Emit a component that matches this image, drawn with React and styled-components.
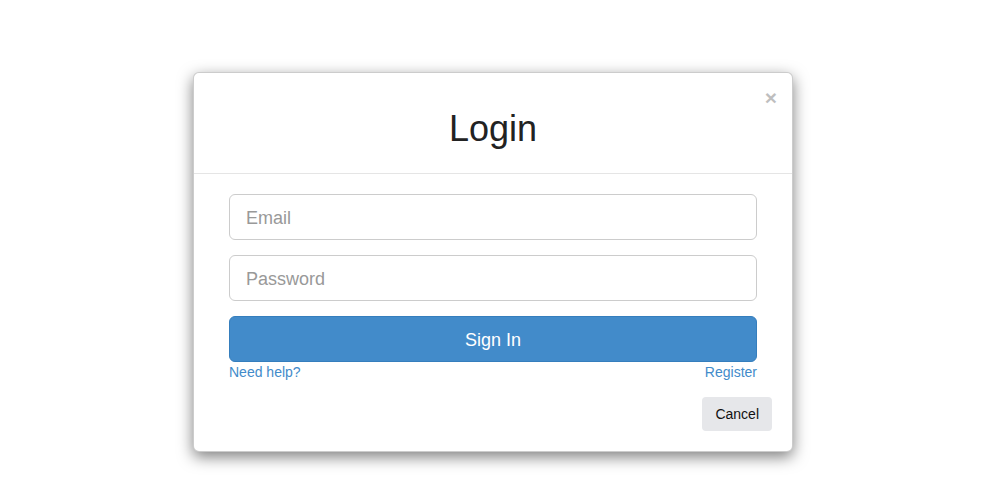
import React from "react";
import styled, { createGlobalStyle } from "styled-components";

const Global = createGlobalStyle`
  html, body { margin: 0; padding: 0; background: #fff; }
  body { font-family: "Liberation Sans", Arial, sans-serif; }
  * { box-sizing: border-box; }
`;

const Page = styled.div`
  width: 1000px;
  height: 500px;
  padding: 72px 0 0 193px;
`;

const Modal = styled.div`
  position: relative;
  width: 600px;
  background: #fff;
  border: 1px solid rgba(0, 0, 0, 0.2);
  border-radius: 6px;
  box-shadow: 0 5px 15px rgba(0, 0, 0, 0.5);
`;

const Header = styled.div`
  height: 101px;
  border-bottom: 1px solid #e5e5e5;
  display: flex;
  align-items: center;
  justify-content: center;
  padding-top: 12px;
`;

const Title = styled.h1`
  margin: 0;
  font-size: 36px;
  font-weight: 400;
  color: #222;
  line-height: 1.1;
`;

const Close = styled.button`
  position: absolute;
  top: 14px;
  right: 15px;
  border: 0;
  background: none;
  padding: 0;
  font-family: "Liberation Sans", Arial, sans-serif;
  font-size: 21px;
  font-weight: 700;
  line-height: 1;
  color: #000;
  opacity: 0.25;
`;

const Body = styled.div`
  padding: 20px 35px 0 35px;
  display: flex;
  flex-direction: column;
  gap: 15px;
`;

const Input = styled.input`
  width: 100%;
  height: 46px;
  padding: 2px 16px 0 16px;
  border: 1px solid #ccc;
  border-radius: 6px;
  font-family: "Liberation Sans", Arial, sans-serif;
  font-size: 18px;
  color: #555;
  outline: none;
  &::placeholder { color: #999; }
`;

const Stack = styled.div`
  display: flex;
  flex-direction: column;
`;

const Primary = styled.button`
  width: 100%;
  height: 46px;
  padding: 3px 0 0 0;
  border: 1px solid #357ebd;
  border-radius: 6px;
  background: #428bca;
  color: #fff;
  font-family: "Liberation Sans", Arial, sans-serif;
  font-size: 18px;
`;

const Links = styled.div`
  display: flex;
  justify-content: space-between;
`;

const Link = styled.a`
  font-size: 14px;
  line-height: 20px;
  color: #428bca;
  text-decoration: none;
`;

const Footer = styled.div`
  display: flex;
  justify-content: flex-end;
  padding: 15px 20px 20px 20px;
`;

const Secondary = styled.button`
  height: 34px;
  padding: 0 13px;
  border: 0;
  border-radius: 4px;
  background: #e6e7ea;
  color: #111;
  font-family: "Liberation Sans", Arial, sans-serif;
  font-size: 14px;
`;

export default function App() {
  return (
    <>
      <Global />
      <Page>
        <Modal>
          <Close aria-label="Close">×</Close>
          <Header>
            <Title>Login</Title>
          </Header>
          <Body>
            <Input type="email" placeholder="Email" />
            <Input type="password" placeholder="Password" />
            <Stack>
              <Primary>Sign In</Primary>
              <Links>
                <Link href="#">Need help?</Link>
                <Link href="#">Register</Link>
              </Links>
            </Stack>
          </Body>
          <Footer>
            <Secondary>Cancel</Secondary>
          </Footer>
        </Modal>
      </Page>
    </>
  );
}
